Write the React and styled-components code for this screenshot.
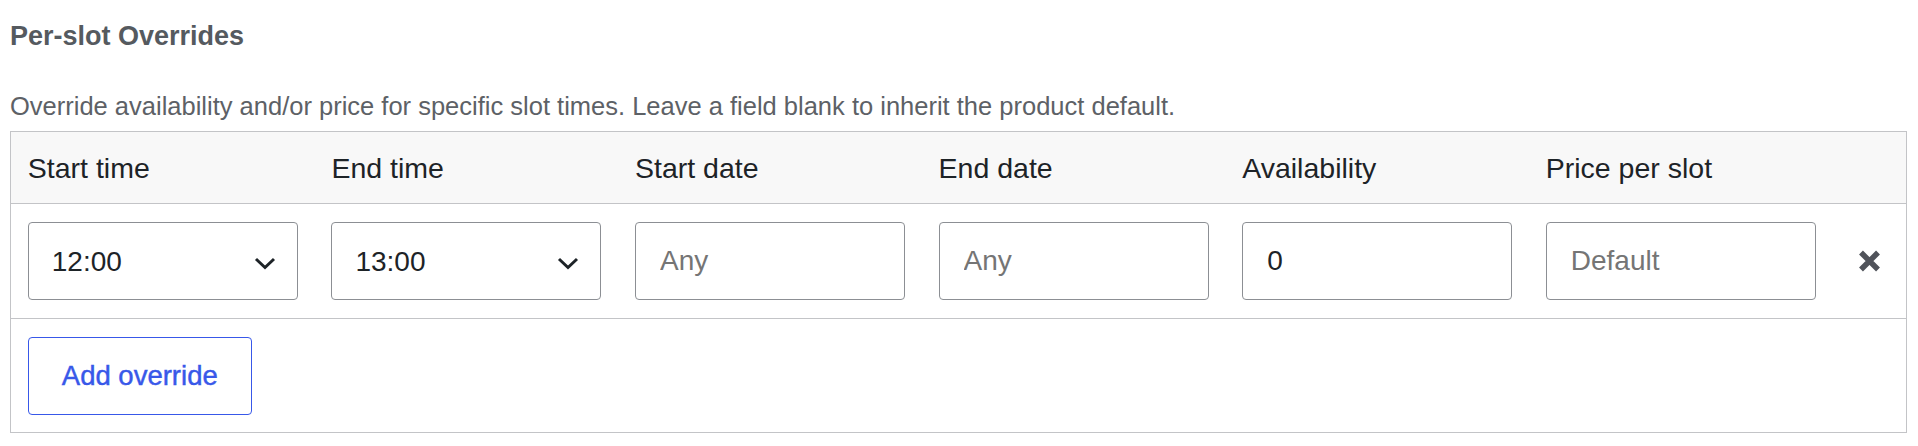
import React from "react"
import styled, { createGlobalStyle } from "styled-components"

const GlobalStyle = createGlobalStyle`
  html, body {
    margin: 0;
    padding: 0;
    background: #fff;
  }
  body {
    font-family: "Liberation Sans", Arial, sans-serif;
    color: #1d2327;
  }
  * {
    box-sizing: border-box;
  }
`

const COLUMNS = ["Start time", "End time", "Start date", "End date", "Availability", "Price per slot"]

const Page = styled.section`
  padding: 19.5px 11px 0 10px;
`

const Title = styled.h3`
  margin: 0;
  font-size: 27px;
  line-height: 32px;
  font-weight: 700;
  color: #555a5f;
`

const Description = styled.p`
  margin: 39.5px 0 10px;
  font-size: 25.5px;
  line-height: 30px;
  color: #5d6166;
`

const Table = styled.div`
  border: 1px solid #c3c4c7;
  background: #fff;
`

const Grid = styled.div`
  display: grid;
  grid-template-columns: repeat(6, 270px) 1fr;
  column-gap: 33.6px;
  align-items: center;
  padding: 0 16.8px;
`

const HeaderRow = styled(Grid)`
  height: 72px;
  background: #f8f8f8;
  border-bottom: 1px solid #c3c4c7;
`

const HeadCell = styled.div`
  font-size: 28.5px;
  line-height: 34px;
  color: #1d2327;
  white-space: nowrap;
`

const Row = styled(Grid)`
  padding-top: 18px;
  padding-bottom: 17.5px;
  border-bottom: 1px solid #c3c4c7;
`

const field = `
  width: 100%;
  height: 78px;
  margin: 0;
  padding: 0 24px;
  border: 1px solid #8c8f94;
  border-radius: 4px;
  background: #fff;
  font-family: "Liberation Sans", Arial, sans-serif;
  font-size: 28px;
  color: #1d2327;
  outline: none;
`

const SelectWrap = styled.div`
  position: relative;
`

const Select = styled.select`
  ${field}
  appearance: none;
  -webkit-appearance: none;
  padding-left: 23px;
`

const Chevron = styled.svg`
  position: absolute;
  right: 22px;
  top: 50%;
  margin-top: -4px;
  width: 22px;
  height: 13px;
  pointer-events: none;
`

const TextInput = styled.input`
  ${field}
  &::placeholder {
    color: #757575;
    opacity: 1;
  }
`

const RemoveButton = styled.button`
  justify-self: center;
  display: flex;
  align-items: center;
  justify-content: center;
  width: 30px;
  height: 30px;
  padding: 0;
  border: 0;
  background: none;
  color: #50535a;
  cursor: pointer;
`

const Footer = styled.div`
  padding: 18px 16.8px 17.5px;
`

const AddButton = styled.button`
  height: 78px;
  padding: 0 33px;
  border: 1px solid #3858e9;
  border-radius: 4px;
  background: #fff;
  color: #3858e9;
  font-family: "Liberation Sans", Arial, sans-serif;
  font-size: 27.5px;
  -webkit-text-stroke: 0.45px #3858e9;
  cursor: pointer;
`

const TimeSelect = ({ value }) => (
  <SelectWrap>
    <Select defaultValue={value}>
      <option>{value}</option>
    </Select>
    <Chevron viewBox="0 0 22 13" fill="none">
      <polyline points="2,2 11,10.5 20,2" stroke="#1d2327" strokeWidth="3" />
    </Chevron>
  </SelectWrap>
)

const App = () => {
  return (
    <>
      <GlobalStyle />
      <Page>
        <Title>Per-slot Overrides</Title>
        <Description>
          Override availability and/or price for specific slot times. Leave a field blank to inherit the product default.
        </Description>
        <Table>
          <HeaderRow>
            {COLUMNS.map((c) => (
              <HeadCell key={c}>{c}</HeadCell>
            ))}
            <HeadCell />
          </HeaderRow>
          <Row>
            <TimeSelect value="12:00" />
            <TimeSelect value="13:00" />
            <TextInput placeholder="Any" />
            <TextInput placeholder="Any" />
            <TextInput defaultValue="0" />
            <TextInput placeholder="Default" />
            <RemoveButton aria-label="Remove">
              <svg width="23" height="22" viewBox="0 0 23 22">
                <path d="M3 2.5 L20 19.5 M20 2.5 L3 19.5" stroke="currentColor" strokeWidth="5.5" />
              </svg>
            </RemoveButton>
          </Row>
          <Footer>
            <AddButton>Add override</AddButton>
          </Footer>
        </Table>
      </Page>
    </>
  )
}

export default App
